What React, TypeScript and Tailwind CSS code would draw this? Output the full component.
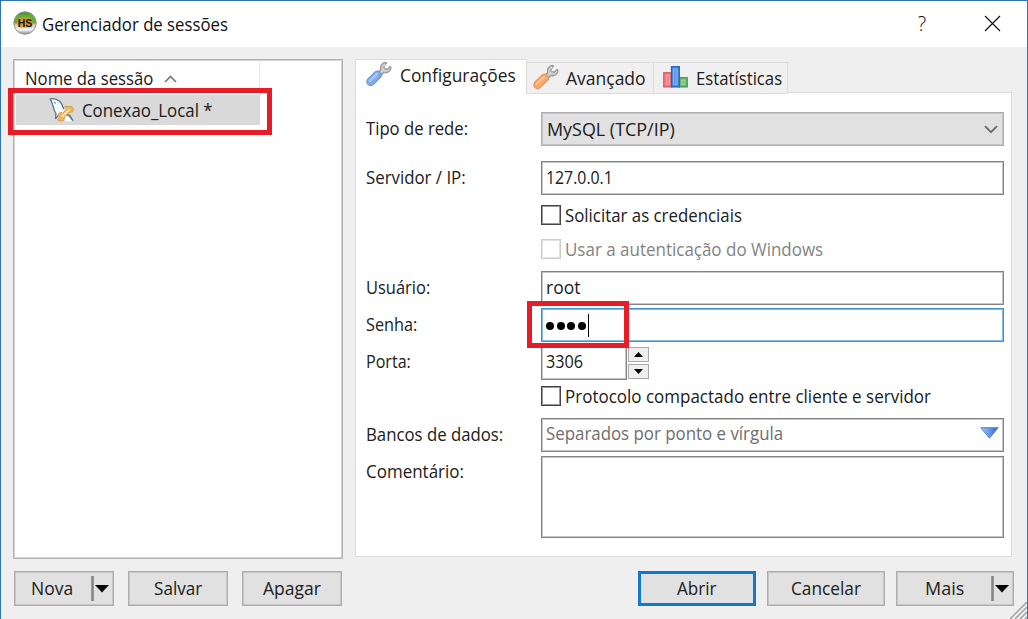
import { useLayoutEffect, useRef, useState, type ReactNode } from "react";

/** One line of text squeezed or stretched horizontally to a given width. */
function Fit({ w, children, className = "" }: { w: number; children: string; className?: string }) {
  const ref = useRef<HTMLSpanElement>(null);
  const [scale, setScale] = useState(1);
  useLayoutEffect(() => {
    if (ref.current) setScale(w / ref.current.offsetWidth);
  }, [w]);
  return (
    <span className={`block h-6 shrink-0 leading-6 ${className}`} style={{ width: w }}>
      <span ref={ref} className="inline-block origin-left whitespace-nowrap" style={{ transform: `scaleX(${scale})` }}>
        {children}
      </span>
    </span>
  );
}

function Row({ label, w, className = "", labelClass = "pt-[4px]", children }: { label?: string; w?: number; className?: string; labelClass?: string; children: ReactNode }) {
  return (
    <div className={`flex ${className}`}>
      <div className={`w-[176px] shrink-0 pl-px ${labelClass}`}>{label && <Fit w={w ?? 100}>{label}</Fit>}</div>
      {children}
    </div>
  );
}

function Field({ className = "", children }: { className?: string; children?: ReactNode }) {
  return (
    <div className={`flex border border-[#838383] pt-[3px] pl-[4px] inset-ring inset-ring-[#c6c6c6] ${className}`}>{children}</div>
  );
}

function Check({ w, label, disabled = false }: { w: number; label: string; disabled?: boolean }) {
  return (
    <div className={`flex h-5 items-center gap-[4px] ${disabled ? "text-[#838383]" : ""}`}>
      <span className={`size-5 shrink-0 border bg-white inset-ring ${disabled ? "border-[#cccccc] inset-ring-[#e2e2e2]" : "border-[#444] inset-ring-[#999]"}`} />
      <Fit w={w}>{label}</Fit>
    </div>
  );
}

function Wrench({ color, edge, light }: { color: string; edge: string; light: string }) {
  return (
    <svg width="26" height="26" viewBox="0 0 26 26" className="shrink-0">
      <path d="M11.5 11.8 14.6 8.7C13.8 5.5 15.5 2 19.2 1.4L20.6 2 17.8 4.7 18.5 7.6 21.3 8.2 24.1 5.4 25 6.6C24.8 10.3 21.3 12.5 18 11.5L14.6 14.8Z" fill="#cacaca" stroke="#9a9a9a" strokeWidth="1.3" strokeLinejoin="round" />
      <path d="M16 10 18.3 7.9M17.2 5.3 19 3" stroke="#e6e6e6" strokeWidth="1" />
      <path d="M9.4 10.8Q11.6 9.3 13.8 11.4 16.4 13.8 15 16L7.2 23.6Q4.4 25.7 1.9 23.3 -.2 20.8 1.8 18.1Z" fill={color} stroke={edge} strokeWidth="1.1" />
      <path d="M3.8 19.9 11 13" stroke={light} strokeWidth="2.6" strokeLinecap="round" />
    </svg>
  );
}

function ChartIcon() {
  return (
    <svg width="25" height="22" viewBox="0 0 25 22" className="shrink-0">
      <rect x="0.7" y="6.7" width="8" height="14.2" fill="#f07078" stroke="#e0606a" strokeWidth="1.3" />
      <rect x="3" y="9" width="3.4" height="9.6" fill="#f4848b" stroke="#fba9ad" strokeWidth=".8" />
      <rect x="16.4" y="11.7" width="7.8" height="9.2" fill="#69b86d" stroke="#4b9652" strokeWidth="1.3" />
      <rect x="18.9" y="14" width="3" height="4.6" fill="#7cc47c" stroke="#a6dda4" strokeWidth=".8" />
      <rect x="8.5" y="0.7" width="7.8" height="20.2" fill="#4f8de0" stroke="#2b62bd" strokeWidth="1.3" />
      <rect x="10.6" y="3" width="3.6" height="15.5" fill="#669fe9" stroke="#82b5f3" strokeWidth=".8" />
    </svg>
  );
}

function AppIcon() {
  return (
    <svg width="24" height="24" viewBox="0 0 24 24" className="-mt-[2px] shrink-0">
      <defs>
        <linearGradient id="ball" x1="0" y1="0" x2="0" y2="1">
          <stop offset="0" stopColor="#4a8a35" />
          <stop offset=".2" stopColor="#5fb236" />
          <stop offset=".48" stopColor="#62a83b" />
          <stop offset=".56" stopColor="#c4c6c0" />
          <stop offset=".8" stopColor="#f4f4f4" />
          <stop offset="1" stopColor="#8c8f8c" />
        </linearGradient>
      </defs>
      <circle cx="12" cy="12" r="11.2" fill="url(#ball)" stroke="#8b9485" strokeWidth="1" />
      <rect x="4.5" y="6.6" width="15" height="10" rx="3" fill="#d9972a" opacity=".9" />
      <text x="12" y="15.6" textAnchor="middle" fontFamily="Liberation Sans" fontWeight="bold" fontSize="10.5" fill="#24170a">HS</text>
    </svg>
  );
}

function DolphinIcon() {
  return (
    <svg width="26" height="26" viewBox="0 0 26 26" className="shrink-0">
      <path d="M16 17 25 24.2H16Z" fill="#fff" />
      <path d="M1.2 1.8C5 .8 10 3 12.2 6.2 14 9 13.8 11.5 15.2 14L13 18.3 10.5 15 9.8 19.5 6.6 22 6.9 16.4C3.8 12.4 5.2 8.7 1.2 1.8Z" fill="#f5fbfc" />
      <path d="M9.8 18 6.6 21.6 6.9 16.4C3.8 12.4 5.2 8.7 1.2 1.8 5 .8 10 3 12.2 6.2 13.6 8.4 13.8 10 14.6 12" fill="none" stroke="#55798c" strokeWidth="1.3" strokeLinejoin="round" />
      <path d="M5 5.1 6.8 6.5" stroke="#789aaa" strokeWidth="1.2" />
      <path d="M17.5 17.5 20.5 18.5 24 23.8" stroke="#55798c" strokeWidth="1.6" fill="none" />
      <path d="M8.6 17.6 12 15.2 13.6 16.2 18 12.4 15.6 9.6 22.4 9.3 24.6 12.6 23.4 15 19.6 15.4 15.2 20.8 14.6 23.4 10.4 24.4 8.6 22.4 11 20Z" fill="#efb95c" stroke="#dc9d48" strokeWidth="1" strokeLinejoin="round" />
      <path d="M12.6 20 20.3 12.6" stroke="#ffe09a" strokeWidth="2.2" />
    </svg>
  );
}

function Button({ w, label, split = false, primary = false, className = "" }: { w: number; label: string; split?: boolean; primary?: boolean; className?: string }) {
  return (
    <button className={`flex h-[35px] shrink-0 items-center bg-[#e1e1e1] ${primary ? "border-[3px] border-[#0f78d2]" : "border border-[#adadad] inset-ring inset-ring-[#c6c6c6]"} ${split ? "justify-between" : "justify-center"} ${className}`}>
      <Fit w={w} className="-mt-px text-left">{label}</Fit>
      {split && (
        <svg width="23" height="27" viewBox="0 0 23 27">
          <path d="M2.5 1V26" stroke="#858585" strokeWidth="2.6" />
          <path d="M5 10H19L12 17.5Z" fill="#000" />
        </svg>
      )}
    </button>
  );
}

export default function App() {
  return (
    <div className="relative flex h-[619px] w-[1028px] flex-col overflow-hidden border-x border-t border-[#2d74b1] bg-[#efefef] font-['Open_Sans','Noto_Sans',sans-serif] text-[17.5px] text-[#202020]">
      <header className="flex h-[46px] shrink-0 items-center bg-white pl-3 text-[#111]">
        <AppIcon />
        <Fit w={186} className="ml-[5px] text-[18px]">Gerenciador de sessões</Fit>
        <span className="ml-[688px] w-3 text-center font-['Open_Sans',sans-serif] text-[20px] leading-none font-light">?</span>
        <svg width="17" height="17" viewBox="0 0 17 17" className="-mt-px ml-[56px]">
          <path d="M1 1 16 16M16 1 1 16" stroke="#111" strokeWidth="1.2" />
        </svg>
      </header>

      <main className="flex h-[512px] shrink-0 pt-3 pl-3">
        <section className="h-[500px] w-[330px] shrink-0 border border-[#b0b2b7] bg-white p-[2px] inset-ring inset-ring-[#d3d4d7]">
          <div className="flex h-[33px] w-[244px] items-start border-r border-[#e2e2e2] pt-[4px] pl-[9px]">
            <Fit w={128}>Nome da sessão</Fit>
            <svg width="13" height="8" viewBox="0 0 13 8" className="mt-[9px] ml-[11px]">
              <path d="M1 7 6.5 1.5 12 7" fill="none" stroke="#777" strokeWidth="1.6" />
            </svg>
          </div>
          <div className="flex h-[30px] w-[244px] items-center bg-[#d9d9d9] pl-[33px]">
            <DolphinIcon />
            <Fit w={131} className="ml-[7px]">Conexao_Local *</Fit>
          </div>
        </section>

        <section className="ml-[12px] flex w-[658px] shrink-0 flex-col">
          <nav className="z-10 flex h-[35px] shrink-0 items-end">
            <div className="flex h-[35px] w-[172px] border-x-[1.5px] border-t-[1.5px] border-[#dcdcdc] bg-white pt-px pl-[10px]">
              <Wrench color="#83abe9" edge="#6e95d6" light="#a6c6f4" />
              <Fit w={116} className="mt-[2px] ml-[8px]">Configurações</Fit>
            </div>
            <div className="flex h-8 w-[127px] border-t-[1.5px] border-r-[1.5px] border-b-[1.5px] border-[#dcdcdc] bg-[#f0f0f0] pt-px pl-[6px]">
              <Wrench color="#f8a76b" edge="#ec9657" light="#fdc092" />
              <Fit w={80} className="mt-[2px] ml-[7px]">Avançado</Fit>
            </div>
            <div className="flex h-8 w-[134px] border-t-[1.5px] border-r-[1.5px] border-b-[1.5px] border-[#dcdcdc] bg-[#f0f0f0] pt-[3px] pl-[9px]">
              <ChartIcon />
              <Fit w={86} className="ml-[8px]">Estatísticas</Fit>
            </div>
          </nav>
          <div className="-mt-[2px] h-[465px] w-[657px] border-[1.5px] border-[#dcdcdc] bg-white pt-[19px] pl-[9px]">
            <Row label="Tipo de rede:" w={102}>
              <div className="flex h-[34px] w-[463px] items-center justify-between border border-[#adadad] bg-[#e1e1e1] pr-[5px] pl-[5px] inset-ring inset-ring-[#c6c6c6]">
                <Fit w={128}>MySQL (TCP/IP)</Fit>
                <svg width="14" height="9" viewBox="0 0 14 9" className="mt-px"><path d="M1 1.2 7 7.2 13 1.2" fill="none" stroke="#6a6a6a" strokeWidth="1.8" /></svg>
              </div>
            </Row>
            <Row label="Servidor / IP:" w={100} className="mt-[15px]">
              <Field className="h-[34px] w-[463px]"><Fit w={67}>127.0.0.1</Fit></Field>
            </Row>
            <Row className="mt-[10px]"><Check w={177} label="Solicitar as credenciais" /></Row>
            <Row className="mt-[14px]"><Check w={258} label="Usar a autenticação do Windows" disabled /></Row>
            <Row label="Usuário:" w={64} className="mt-[12px]">
              <Field className="h-[34px] w-[463px]"><Fit w={34}>root</Fit></Field>
            </Row>
            <Row label="Senha:" w={51} className="mt-[3px]">
              <div className="flex h-[34px] w-[463px] items-center border border-[#3f92d0] pl-[4px] inset-ring inset-ring-[#86bbe3]">
                <div className="flex gap-[2.5px] pt-[2px]">
                  {[0, 1, 2, 3].map((i) => <span key={i} className="size-2 rounded-full bg-black" />)}
                </div>
                <span className="ml-[2px] h-[23px] w-[1.5px] bg-black" />
              </div>
            </Row>
            <Row label="Porta:" w={45} className="mt-[3px]">
              <Field className="h-[35px] w-[86px]"><Fit w={37}>3306</Fit></Field>
              <div className="ml-[1px] flex flex-col gap-[2px] pt-[2px]">
                <span className="flex h-[15px] w-[21px] items-center justify-center border border-[#a7a7a7] bg-[#efefef]">
                  <svg width="9" height="5" viewBox="0 0 9 5"><path d="M0 5H9L4.5 0Z" fill="#000" /></svg>
                </span>
                <span className="flex h-[15px] w-[21px] items-center justify-center border border-[#a7a7a7] bg-[#efefef]">
                  <svg width="9" height="5" viewBox="0 0 9 5"><path d="M0 0H9L4.5 5Z" fill="#000" /></svg>
                </span>
              </div>
            </Row>
            <Row className="mt-[6px]"><Check w={366} label="Protocolo compactado entre cliente e servidor" /></Row>
            <Row label="Bancos de dados:" w={137} className="mt-[12px]">
              <Field className="h-[34px] w-[463px] justify-between pr-[4px] text-[#6e6e6e]">
                <Fit w={237} className="-mt-px">Separados por ponto e vírgula</Fit>
                <svg width="19" height="12" viewBox="0 0 19 12" className="mt-[5px]">
                  <defs><linearGradient id="tri" x1="0" y1="0" x2="1" y2="0"><stop offset="0" stopColor="#a5c8f7" /><stop offset="1" stopColor="#2865cb" /></linearGradient></defs>
                  <path d="M.8 .7H18.2L9.5 11.2Z" fill="url(#tri)" stroke="#4d83d4" strokeWidth="1" />
                </svg>
              </Field>
            </Row>
            <Row label="Comentário:" w={98} className="mt-[4px]" labelClass="pt-[3px]">
              <Field className="h-[82px] w-[463px]" />
            </Row>
          </div>
        </section>
      </main>

      <footer className="flex pt-[12px] pl-[13px]">
        <Button w={42} label="Nova" split className="w-[100px] pl-4" />
        <Button w={48} label="Salvar" className="ml-[14px] w-[100px]" />
        <Button w={58} label="Apagar" className="ml-[14px] w-[100px]" />
        <Button w={40} label="Abrir" primary className="ml-[296px] w-[118px]" />
        <Button w={70} label="Cancelar" className="ml-[11px] w-[118px]" />
        <Button w={39} label="Mais" split className="ml-[11px] w-[118px] pl-[28px]" />
      </footer>

      <svg width="17" height="17" viewBox="0 0 17 17" className="absolute right-0 bottom-0">
        <path d="M0 17 17 0M5 17 17 5M10 17 17 10M15 17 17 15" stroke="#a0a0a0" strokeWidth="1.5" />
      </svg>
      <div className="absolute top-[87px] left-[7px] h-[47px] w-[264px] border-[5px] border-[#e81c26]" />
      <div className="absolute top-[300px] left-[526px] z-20 h-[47px] w-[102px] border-[5px] border-[#e81c26]" />
    </div>
  );
}
